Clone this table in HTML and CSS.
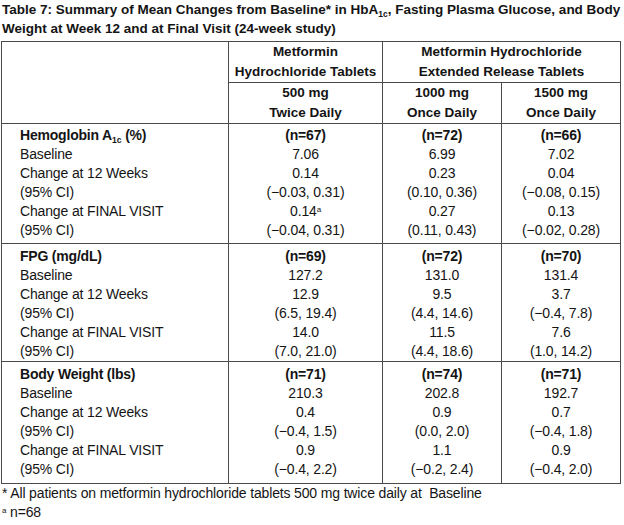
FILE: index.html
```html
<!DOCTYPE html>
<html lang="en">
<head>
<meta charset="utf-8">
<title>Table 7</title>
<link rel="stylesheet" href="styles.css">
</head>
<body>
<h1 class="title">Table 7: Summary of Mean Changes from Baseline* in HbA<sub class="sub">1c</sub>, Fasting Plasma Glucose, and Body<br>Weight at Week 12 and at Final Visit (24-week study)</h1>
<table class="data">
  <colgroup>
    <col class="c-label">
    <col class="c-a">
    <col class="c-b">
    <col class="c-c">
  </colgroup>
  <thead>
    <tr>
      <th rowspan="2" class="blank"></th>
      <th>Metformin<br>Hydrochloride Tablets</th>
      <th colspan="2">Metformin Hydrochloride<br>Extended Release Tablets</th>
    </tr>
    <tr>
      <th>500 mg<br>Twice Daily</th>
      <th>1000 mg<br>Once Daily</th>
      <th>1500 mg<br>Once Daily</th>
    </tr>
  </thead>
  <tbody class="section sec-hb">
    <tr class="head"><td>Hemoglobin A<sub class="sub">1c</sub> (%)</td><td>(n=67)</td><td>(n=72)</td><td>(n=66)</td></tr>
    <tr><td>Baseline</td><td>7.06</td><td>6.99</td><td>7.02</td></tr>
    <tr><td>Change at 12 Weeks</td><td>0.14</td><td>0.23</td><td>0.04</td></tr>
    <tr><td>(95% CI)</td><td>(&minus;0.03, 0.31)</td><td>(0.10, 0.36)</td><td>(&minus;0.08, 0.15)</td></tr>
    <tr><td>Change at FINAL VISIT</td><td>0.14<sup class="fn">a</sup></td><td>0.27</td><td>0.13</td></tr>
    <tr class="last"><td>(95% CI)</td><td>(&minus;0.04, 0.31)</td><td>(0.11, 0.43)</td><td>(&minus;0.02, 0.28)</td></tr>
  </tbody>
  <tbody class="section sec-fpg">
    <tr class="head"><td>FPG (mg/dL)</td><td>(n=69)</td><td>(n=72)</td><td>(n=70)</td></tr>
    <tr><td>Baseline</td><td>127.2</td><td>131.0</td><td>131.4</td></tr>
    <tr><td>Change at 12 Weeks</td><td>12.9</td><td>9.5</td><td>3.7</td></tr>
    <tr><td>(95% CI)</td><td>(6.5, 19.4)</td><td>(4.4, 14.6)</td><td>(&minus;0.4, 7.8)</td></tr>
    <tr><td>Change at FINAL VISIT</td><td>14.0</td><td>11.5</td><td>7.6</td></tr>
    <tr class="last"><td>(95% CI)</td><td>(7.0, 21.0)</td><td>(4.4, 18.6)</td><td>(1.0, 14.2)</td></tr>
  </tbody>
  <tbody class="section sec-bw">
    <tr class="head"><td>Body Weight (lbs)</td><td>(n=71)</td><td>(n=74)</td><td>(n=71)</td></tr>
    <tr><td>Baseline</td><td>210.3</td><td>202.8</td><td>192.7</td></tr>
    <tr><td>Change at 12 Weeks</td><td>0.4</td><td>0.9</td><td>0.7</td></tr>
    <tr><td>(95% CI)</td><td>(&minus;0.4, 1.5)</td><td>(0.0, 2.0)</td><td>(&minus;0.4, 1.8)</td></tr>
    <tr><td>Change at FINAL VISIT</td><td>0.9</td><td>1.1</td><td>0.9</td></tr>
    <tr class="last"><td>(95% CI)</td><td>(&minus;0.4, 2.2)</td><td>(&minus;0.2, 2.4)</td><td>(&minus;0.4, 2.0)</td></tr>
  </tbody>
</table>
<p class="note">* All patients on metformin hydrochloride tablets 500 mg twice daily at&nbsp; Baseline</p>
<p class="note"><sup class="fn">a</sup> n=68</p>
</body>
</html>
```

FILE: styles.css
```css
html, body {
  margin: 0;
  padding: 0;
  background: #ffffff;
}

body {
  font-family: "Liberation Sans", Arial, sans-serif;
  color: #141414;
  font-size: 14px;
  letter-spacing: -0.15px;
}

.title {
  margin: 0;
  padding: 0 0 3px 2px;
  font-size: 13.5px;
  font-weight: bold;
  line-height: 19px;
  letter-spacing: 0;
}

.sub {
  font-size: 8.5px;
  line-height: 0;
  vertical-align: -3px;
  letter-spacing: 0;
}

.fn {
  font-size: 8px;
  line-height: 0;
  vertical-align: 4px;
  font-weight: normal;
}

.data {
  margin-left: 1px;
  width: 619px;
  table-layout: fixed;
  border-collapse: collapse;
  border: 1px solid #4a4a4a;
}

.c-label { width: 227px; }
.c-a { width: 154px; }
.c-b { width: 119px; }
.c-c { width: 119px; }

.data th {
  font-weight: bold;
  font-size: 13.5px;
  letter-spacing: 0;
  line-height: 20px;
  padding: 0;
  text-align: center;
  border: 1px solid #4a4a4a;
}

.data td {
  padding: 0;
  line-height: 19px;
  text-align: center;
  border-left: 1px solid #4a4a4a;
  border-right: 1px solid #4a4a4a;
  white-space: nowrap;
}

.data td:first-child {
  text-align: left;
  padding-left: 18px;
}

.section {
  border-top: 1px solid #4a4a4a;
}

.head td {
  font-weight: bold;
  font-size: 14px;
  letter-spacing: -0.2px;
}

.sec-hb .head td { padding-top: 2px; }
.sec-hb .last td { padding-bottom: 3px; }
.sec-fpg .head td { padding-top: 3px; }
.sec-fpg .last td { padding-bottom: 0; }
.sec-bw .head td { padding-top: 3px; }
.sec-bw .last td { padding-bottom: 4px; }

.note {
  margin: 0;
  padding-left: 2px;
  line-height: 19px;
}
```
